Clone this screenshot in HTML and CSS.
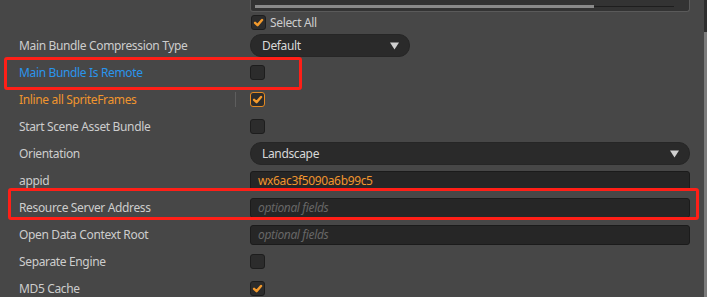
FILE: index.html
```html
<!DOCTYPE html>
<html lang="en">
<head>
    <meta charset="UTF-8">
    <title>Build Settings</title>
    <link rel="stylesheet" href="styles.css">
</head>
<body>
    <div class="panel">
        <div class="list-box">
            <div class="hscroll"><div class="hthumb"></div></div>
        </div>

        <div class="select-all">
            <span class="check checked"><svg viewBox="0 0 14 14"><path d="M3.3 7.3 L6 9.8 L10.8 4.3"/></svg></span>
            <span>Select All</span>
        </div>

        <div class="row">
            <div class="label">Main Bundle Compression Type</div>
            <div class="field">
                <div class="dropdown short">Default <svg class="arrow" viewBox="0 0 10 8"><polygon points="0,0 10,0 5,8"/></svg></div>
            </div>
        </div>

        <div class="row">
            <span class="mark mark-remote"></span>
            <div class="label blue">Main Bundle Is Remote</div>
            <div class="field"><span class="check"></span></div>
        </div>

        <div class="row">
            <div class="label orange">Inline all SpriteFrames</div>
            <span class="handle"></span>
            <div class="field">
                <span class="check checked changed"><svg viewBox="0 0 14 14"><path d="M3.3 7.3 L6 9.8 L10.8 4.3"/></svg></span>
            </div>
        </div>

        <div class="row">
            <div class="label">Start Scene Asset Bundle</div>
            <div class="field"><span class="check"></span></div>
        </div>

        <div class="row">
            <div class="label">Orientation</div>
            <div class="field">
                <div class="dropdown">Landscape <svg class="arrow" viewBox="0 0 10 8"><polygon points="0,0 10,0 5,8"/></svg></div>
            </div>
        </div>

        <div class="row">
            <div class="label">appid</div>
            <div class="field"><div class="input value">wx6ac3f5090a6b99c5</div></div>
        </div>

        <div class="row">
            <span class="mark mark-server"></span>
            <div class="label">Resource Server Address</div>
            <div class="field"><div class="input placeholder">optional fields</div></div>
        </div>

        <div class="row">
            <div class="label">Open Data Context Root</div>
            <div class="field"><div class="input placeholder">optional fields</div></div>
        </div>

        <div class="row">
            <div class="label">Separate Engine</div>
            <div class="field"><span class="check"></span></div>
        </div>

        <div class="row">
            <div class="label">MD5 Cache</div>
            <div class="field">
                <span class="check checked"><svg viewBox="0 0 14 14"><path d="M3.3 7.3 L6 9.8 L10.8 4.3"/></svg></span>
            </div>
        </div>
    </div>

    <div class="vscroll"><div class="vthumb"></div></div>
</body>
</html>
```

FILE: styles.css
```css
html, body {
    height: 100%;
}
body {
    margin: 0;
    background-color: #474747;
    color: #cdcdcd;
    font-family: 'Noto Sans', 'Open Sans', sans-serif;
    font-size: 12px;
    letter-spacing: -0.35px;
    display: flex;
    overflow: hidden;
}
.panel {
    flex: 1;
    padding-right: 14px;
}
.list-box {
    margin-left: 250px;
    height: 11px;
    background-color: #333;
    border: 1px solid #5a5a5a;
    border-top: none;
    border-radius: 0 0 3px 3px;
    position: relative;
}
.hscroll {
    margin: 0 15px 0 4px;
    padding-top: 5px;
    height: 3px;
    position: relative;
}
.hscroll::after {
    content: '';
    position: absolute;
    left: 0;
    right: 0;
    top: 6px;
    height: 1px;
    background-color: #1e1e1e;
}
.hthumb {
    width: 339px;
    height: 3px;
    background-color: #8a8a8a;
    position: relative;
    z-index: 1;
}
.select-all {
    display: flex;
    align-items: center;
    gap: 4px;
    height: 20px;
    margin-left: 251px;
}
.row {
    display: flex;
    align-items: center;
    height: 27px;
    position: relative;
}
.label {
    width: 250px;
    padding-left: 19px;
    box-sizing: border-box;
    white-space: nowrap;
}
.label.blue {
    color: #2a95ec;
}
.label.orange {
    color: #f0952e;
}
.field {
    flex: 1;
    display: flex;
    align-items: center;
}
.check {
    width: 13px;
    height: 13px;
    background-color: #2c2c2c;
    border: 1px solid #1d1d1d;
    border-radius: 3px;
    display: inline-flex;
}
.check svg {
    width: 13px;
    height: 13px;
}
.check path {
    fill: none;
    stroke: #f39a2c;
    stroke-width: 2.6;
    stroke-linecap: round;
    stroke-linejoin: round;
}
.check.changed {
    border-color: #e38a22;
}
.dropdown {
    flex: 1;
    height: 21px;
    background-color: #2a2a2a;
    border: 1px solid #262626;
    border-radius: 11px;
    display: flex;
    align-items: center;
    justify-content: space-between;
    padding: 0 10px 0 11px;
    color: #d8d8d8;
}
.dropdown.short {
    flex: 0 0 137px;
}
.arrow {
    width: 9px;
    height: 8px;
    fill: #d0d0d0;
}
.input {
    flex: 1;
    height: 18px;
    line-height: 18px;
    background-color: #262626;
    border: 1px solid #1b1b1b;
    border-radius: 3px;
    padding: 0 7px;
}
.input.value {
    color: #f0952e;
}
.input.placeholder {
    color: #676767;
    font-style: italic;
}
.handle {
    position: absolute;
    left: 235px;
    top: 6px;
    width: 1px;
    height: 15px;
    background-color: #5e5e5e;
}
.mark {
    position: absolute;
    border: 3px solid #ff1f17;
    border-radius: 3px;
    z-index: 2;
}
.mark-remote {
    left: 4px;
    top: -2px;
    width: 292px;
    height: 27px;
}
.mark-server {
    left: 8px;
    top: -6px;
    width: 685px;
    height: 26px;
}
.vscroll {
    width: 3px;
    background-color: #2e2e2e;
    display: flex;
    flex-direction: column;
}
.vthumb {
    margin-top: 32px;
    flex: 1;
    background-color: #7b7b7b;
}
```
